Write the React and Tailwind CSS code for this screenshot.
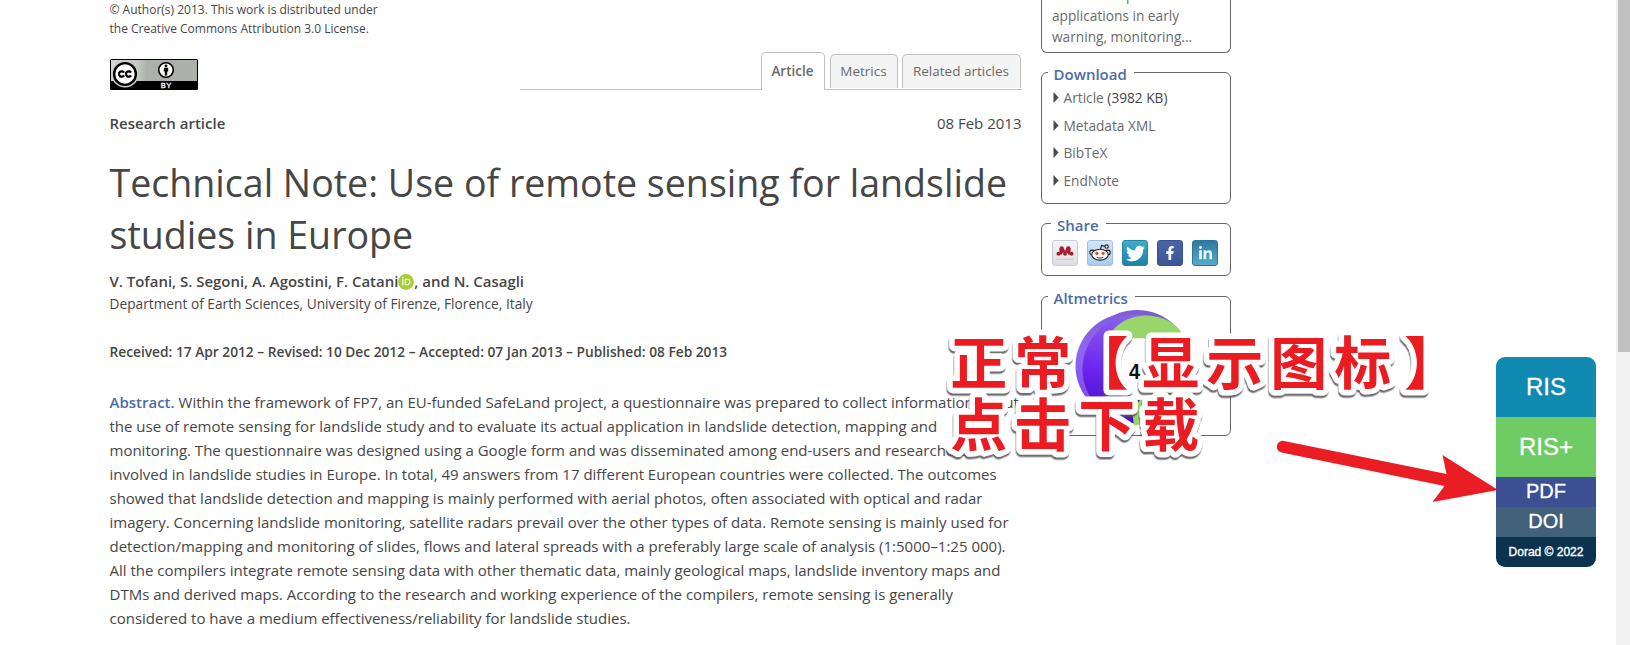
import React from "react";
import { FaTwitter, FaFacebookF, FaLinkedinIn } from "react-icons/fa";

const ABSTRACT_LINES = [
  "the use of remote sensing for landslide study and to evaluate its actual application in landslide detection, mapping and",
  "monitoring. The questionnaire was designed using a Google form and was disseminated among end-users and researchers",
  "involved in landslide studies in Europe. In total, 49 answers from 17 different European countries were collected. The outcomes",
  "showed that landslide detection and mapping is mainly performed with aerial photos, often associated with optical and radar",
  "imagery. Concerning landslide monitoring, satellite radars prevail over the other types of data. Remote sensing is mainly used for",
  "detection/mapping and monitoring of slides, flows and lateral spreads with a preferably large scale of analysis (1:5000–1:25 000).",
  "All the compilers integrate remote sensing data with other thematic data, mainly geological maps, landslide inventory maps and",
  "DTMs and derived maps. According to the research and working experience of the compilers, remote sensing is generally",
  "considered to have a medium effectiveness/reliability for landslide studies.",
];

function CcBadge() {
  return (
    <svg width="88" height="31" viewBox="0 0 88 31" className="block">
      <defs>
        <linearGradient id="ccbg" x1="0" x2="1" y1="0" y2="0">
          <stop offset="0" stopColor="#d4d6d3" />
          <stop offset="0.3" stopColor="#c6c9c5" />
          <stop offset="0.42" stopColor="#abb1aa" />
          <stop offset="1" stopColor="#abb1aa" />
        </linearGradient>
      </defs>
      <rect width="88" height="31" rx="1.5" fill="#000" />
      <rect x="1" y="1" width="86" height="21" fill="url(#ccbg)" />
      <path d="M1 22h2.5A14 14 0 0 0 7 27H1z" fill="#000" />
      <circle cx="15" cy="15" r="13.6" fill="#c9ccc8" />
      <circle cx="15" cy="15" r="10.9" fill="#fff" stroke="#000" strokeWidth="2.4" />
      <g fill="none" stroke="#000" strokeWidth="2.3">
        <path d="M14 13.6a2.7 2.7 0 1 0 0 2.8" />
        <path d="M21 13.6a2.7 2.7 0 1 0 0 2.8" />
      </g>
      <circle cx="56" cy="11" r="7.3" fill="#fff" stroke="#000" strokeWidth="1.6" />
      <circle cx="56" cy="6.9" r="1.4" fill="#000" />
      <path d="M53.8 8.8h4.4v3.8h-1v4h-2.4v-4h-1z" fill="#000" />
      <text x="50.8" y="29" fontSize="7.5" fill="#fff" stroke="#fff" strokeWidth="0.3" fontFamily="Liberation Sans, Arial, sans-serif" textLength="10.4">
        BY
      </text>
    </svg>
  );
}

function OrcidIcon() {
  return (
    <svg width="16" height="16" viewBox="0 0 16 16" className="block self-center translate-y-px">
      <circle cx="8" cy="8" r="7.9" fill="#a6ce39" />
      <g fill="none" stroke="#fff" strokeWidth="1.1">
        <path d="M4.8 5.2v6.1" />
        <path d="M7.3 5.2h1.9a2.5 2.5 0 0 1 0 5.5H7.3z" />
      </g>
      <circle cx="4.8" cy="3.8" r="0.7" fill="#fff" />
    </svg>
  );
}

function Panel({ title, indent, children, className }) {
  return (
    <fieldset className={`w-[190px] rounded-[6px] border border-[#666] ${className}`}>
      <legend className={`h-6 px-1.5 pt-[5px] pr-[7px] text-[15px] leading-[19px] font-semibold text-[#4b6ca8] ${indent}`}>{title}</legend>
      {children}
    </fieldset>
  );
}

function DownloadItem({ children, note }) {
  return (
    <li className="flex h-[27.6px] items-center leading-[27.6px]">
      <svg width="6" height="11" viewBox="0 0 6 11" className="mr-[4.5px] block">
        <path d="M0.5 0v11L5.6 5.5z" fill="#4a4a4a" />
      </svg>
      <span>
        {children}
        {note && <span className="text-[#464646]"> {note}</span>}
      </span>
    </li>
  );
}

function Mendeley() {
  return (
    <svg viewBox="0 0 26 26" className="h-full w-full">
      <g fill="#a81c2c">
        <circle cx="9.4" cy="8.2" r="2.4" />
        <circle cx="16.6" cy="8.2" r="2.4" />
        <path d="M7 8.2h4.8l1.2 2.6 1.2-2.6H19v4.4l1.4 1.6-3.6.6-1.8-2.4h-4l-1.8 2.4-3.6-.6L7 12.6z" />
        <circle cx="5.9" cy="13.8" r="2.1" />
        <circle cx="13" cy="13.8" r="2.1" />
        <circle cx="20.1" cy="13.8" r="2.1" />
      </g>
      <path d="M4 19.8h18" stroke="#dfa9ae" strokeWidth="1.2" strokeDasharray="1.4 .6" />
    </svg>
  );
}

function Reddit() {
  return (
    <svg viewBox="0 0 26 26" className="h-full w-full">
      <g fill="#fff" stroke="#222" strokeWidth="1.2">
        <path d="M13.4 10.2l1.2-5.4 4 1" fill="none" />
        <circle cx="20.2" cy="6" r="1.8" />
        <circle cx="4.4" cy="12.4" r="2.5" />
        <circle cx="21.6" cy="12.4" r="2.5" />
        <ellipse cx="13" cy="14.8" rx="9" ry="5.9" />
      </g>
      <circle cx="9.6" cy="13.4" r="1.7" fill="#f0441c" />
      <circle cx="16.4" cy="13.4" r="1.7" fill="#f0441c" />
      <path d="M9.4 17.4q3.6 2.2 7.2 0" fill="none" stroke="#222" strokeWidth="1.1" />
    </svg>
  );
}

function AltmetricDonut() {
  return (
    <svg width="122" height="118" viewBox="1075 309 122 118" className="block">
      <defs>
        <linearGradient id="violetA" x1="0.6" y1="0" x2="0.2" y2="1">
          <stop offset="0" stopColor="#7a5bd0" />
          <stop offset="0.5" stopColor="#9066f2" />
          <stop offset="1" stopColor="#7a45ea" />
        </linearGradient>
        <linearGradient id="violetB" x1="0.4" y1="0" x2="0.3" y2="1">
          <stop offset="0" stopColor="#8c62f0" />
          <stop offset="0.55" stopColor="#6a22ee" />
          <stop offset="1" stopColor="#3f10b8" />
        </linearGradient>
      </defs>
      <circle cx="1128" cy="366" r="52.5" fill="url(#violetA)" />
      <circle cx="1137" cy="364" r="54" fill="url(#violetA)" />
      <circle cx="1137" cy="369" r="54.5" fill="url(#violetB)" />
      <path d="M1107 340C1118 312 1160 307 1180 330L1192 368L1172 416L1134 426L1132 410L1140 400L1138 370Z" fill="#98d56b" />
      <circle cx="1138" cy="369" r="31" fill="#fff" />
      <text x="1129" y="378.5" fontSize="22" fontWeight="600" fill="#111" fontFamily="Liberation Sans, Arial, sans-serif" textLength="11" lengthAdjust="spacingAndGlyphs">
        4
      </text>
    </svg>
  );
}

const LINE_ONE_X = "950.2 1014.2 1071.5 1142.2 1206.2 1270.2 1334.2 1404";
const LINE_TWO_X = "950.2 1014.2 1078.2 1142.2";

function Annotation() {
  return (
    <svg width="1630" height="645" viewBox="0 0 1630 645" className="pointer-events-none absolute inset-0">
      <defs>
        <filter id="drop" x="-5%" y="-10%" width="110%" height="125%">
          <feDropShadow dx="-0.5" dy="2.5" stdDeviation="0.5" floodColor="#555" floodOpacity="0.85" />
        </filter>
      </defs>
      <g
        fontFamily="'Noto Sans CJK SC', sans-serif"
        fontWeight="700"
        fontSize="57"
        fill="#ea1c24"
        stroke="#fff"
        strokeWidth="11"
        strokeLinejoin="round"
        paintOrder="stroke"
        filter="url(#drop)"
      >
        <text x={LINE_ONE_X} y="384">正常【显示图标】</text>
        <text x={LINE_TWO_X} y="445.5">点击下载</text>
      </g>
      <path
        d="M1284 441L1446.5 474L1442.5 455L1498 490L1432.5 502L1444.5 486L1281.5 452.6A5.9 5.9 0 0 1 1284 441Z"
        fill="#ea1c24"
      />
    </svg>
  );
}

export default function App() {
  return (
    <div className="relative flex h-[645px] w-[1630px] overflow-hidden bg-white font-['Open_Sans',sans-serif] text-[#464646]">
      <main className="ml-[109.5px] w-[912px] shrink-0 whitespace-nowrap">
        <p className="text-[12px] leading-[19px]">
          © Author(s) 2013. This work is distributed under
          <br />
          the Creative Commons Attribution 3.0 License.
        </p>

        <div className="flex h-[52px] items-end">
          <CcBadge />
          <nav className="ml-[322px] flex flex-1 items-end text-[13.5px] text-[#6a6a6a]">
            <span className="h-px w-[241px] bg-[#bfbfbf]" />
            <span className="flex h-[38px] w-[64px] items-center justify-center rounded-t-[5px] border border-b-0 border-[#bfbfbf] font-semibold">
              Article
            </span>
            <span className="flex flex-1 items-end gap-1 border-b border-[#bfbfbf] pb-px pl-[5px]">
              <span className="flex h-[34px] w-[68px] items-center justify-center rounded-t-[5px] border border-b-0 border-[#bfbfbf] bg-[#f4f4f4]">
                Metrics
              </span>
              <span className="flex h-[34px] w-[119px] items-center justify-center rounded-t-[5px] border border-b-0 border-[#bfbfbf] bg-[#f4f4f4]">
                Related articles
              </span>
            </span>
          </nav>
        </div>

        <div className="mt-[21px] flex justify-between text-[15px] leading-6">
          <span className="font-semibold">Research article</span>
          <span>08 Feb 2013</span>
        </div>

        <h1 className="mt-[22px] text-[37.55px] leading-[52px]">
          Technical Note: Use of remote sensing for landslide
          <br />
          studies in Europe
        </h1>

        <div className="mt-2 flex text-[14.95px] leading-6 font-semibold">
          <span>V. Tofani, S. Segoni, A. Agostini, F. Catani</span>
          <OrcidIcon />
          <span>, and N. Casagli</span>
        </div>
        <p className="text-[13.72px] leading-[22px]">Department of Earth Sciences, University of Firenze, Florence, Italy</p>
        <p className="mt-[26px] text-[13.74px] leading-[22px] font-semibold">
          Received: 17 Apr 2012 – Revised: 10 Dec 2012 – Accepted: 07 Jan 2013 – Published: 08 Feb 2013
        </p>

        <div className="mt-[27px] text-[15px] leading-6">
          <p>
            <span className="font-semibold text-[#4b6ca8]">Abstract.</span> Within the framework of FP7, an EU-funded
            SafeLand project, a questionnaire was prepared to collect information about
          </p>
          {ABSTRACT_LINES.map((line) => (
            <p key={line}>{line}</p>
          ))}
        </div>
      </main>

      <aside className="ml-[19.5px] flex w-[190px] shrink-0 flex-col text-[13.7px] text-[#6a6a6a]">
        <div className="flex h-[53px] flex-col justify-end overflow-hidden rounded-b-[6px] border border-t-0 border-[#666] px-2.5 pb-[5px] leading-[21px]">
          <p className="pl-[74px]">p</p>
          <p>applications in early</p>
          <p>warning, monitoring...</p>
        </div>

        <Panel title="Download" indent="ml-[5.5px]" className="mt-[7px] h-[144px]">
          <ul className="px-[11px]">
            <DownloadItem note="(3982 KB)">Article</DownloadItem>
            <DownloadItem>Metadata XML</DownloadItem>
            <DownloadItem>BibTeX</DownloadItem>
            <DownloadItem>EndNote</DownloadItem>
          </ul>
        </Panel>

        <Panel title="Share" indent="ml-[9px]" className="mt-[7px] h-[65px]">
          <div className="mt-[5px] flex gap-[9px] pl-[10px]">
            <span className="h-[26px] w-[26px] rounded-[3px] border border-[#c9ccd3] bg-linear-to-b from-[#f4f5f7] to-[#dcdee3]">
              <Mendeley />
            </span>
            <span className="h-[26px] w-[26px] rounded-[3px] border border-[#9fc0e2] bg-linear-to-b from-[#d3e6fa] to-[#a9cbee]">
              <Reddit />
            </span>
            <span className="flex h-[26px] w-[26px] items-center justify-center rounded-[3px] border border-[#2585a5] bg-linear-to-b from-[#3fabc9] to-[#1b82a8] text-[19px] text-white">
              <FaTwitter />
            </span>
            <span className="flex h-[26px] w-[26px] items-center justify-center rounded-[3px] border border-[#38508f] bg-linear-to-b from-[#4a66a8] to-[#3d5596] text-[14px] text-white">
              <FaFacebookF />
            </span>
            <span className="flex h-[26px] w-[26px] items-center justify-center rounded-[3px] border border-[#2b7596] bg-linear-to-b from-[#2a7ba1] to-[#59a9c8] text-[15px] text-[#e6f4fa]">
              <FaLinkedinIn />
            </span>
          </div>
        </Panel>

        <Panel title="Altmetrics" indent="ml-[5.5px]" className="mt-[8px] h-[152px]">
          <div className="pt-px pl-[33px]">
            <AltmetricDonut />
          </div>
        </Panel>
      </aside>

      <aside className="mt-[357px] ml-auto flex h-[210px] w-[100px] shrink-0 flex-col overflow-hidden rounded-[9px] text-center font-['Liberation_Sans',Arial,sans-serif] text-white">
        <div className="h-[60px] bg-[#118ab2] text-[24px] leading-[60px] [-webkit-text-stroke:0.3px_white]">RIS</div>
        <div className="h-[60px] bg-[#6fcb63] text-[24px] leading-[60px] [-webkit-text-stroke:0.3px_white]">RIS+</div>
        <div className="h-[30px] bg-[#3c4f92] text-[20px] leading-[29px] [-webkit-text-stroke:0.3px_white]">PDF</div>
        <div className="h-[30px] bg-[#41607a] text-[20px] leading-[29px] [-webkit-text-stroke:0.3px_white]">DOI</div>
        <div className="h-[30px] bg-[#0b3350] text-[12px] leading-[30px] [-webkit-text-stroke:0.35px_white]">Dorad © 2022</div>
      </aside>

      <div className="ml-5 h-full w-[14px] shrink-0 bg-[#f1f1f1] pl-0.5">
        <div className="h-[352px] bg-[#c1c1c1]" />
      </div>

      <Annotation />
    </div>
  );
}
